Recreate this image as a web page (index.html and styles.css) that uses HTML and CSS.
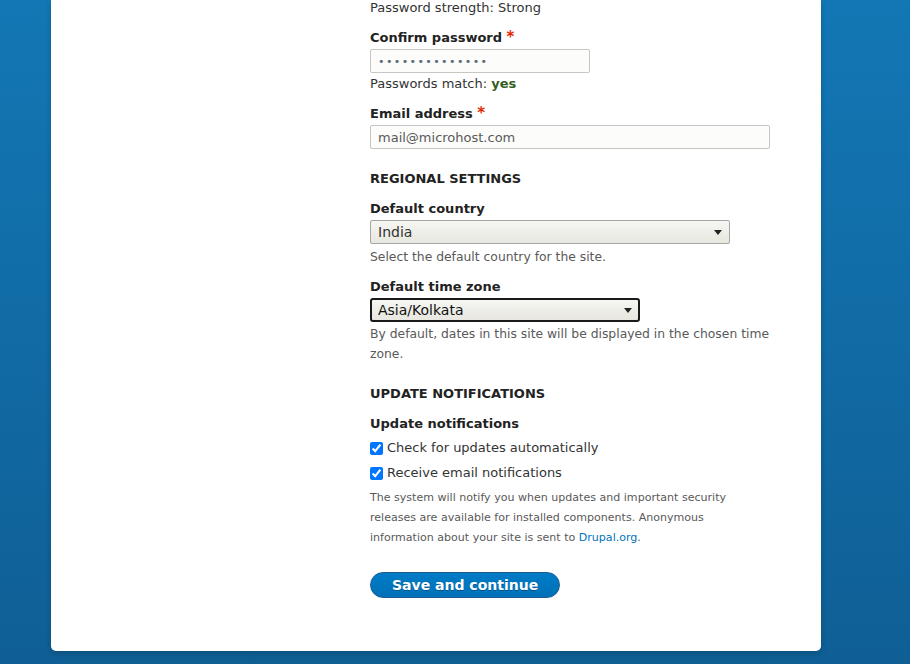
FILE: index.html
```html
<!DOCTYPE html>
<html lang="en">

<head>
    <meta charset="UTF-8">
    <meta name="viewport" content="width=device-width, initial-scale=1.0">
    <title>Configure site | Drupal</title>
    <link rel="stylesheet" href="styles.css">
</head>

<body>
    <div class="page">
        <div class="card">
            <form class="install-form">
                <div class="strength">Password strength: Strong</div>
                <div class="form-item">
                    <label for="pass2">Confirm password <span class="required">*</span></label>
                    <input id="pass2" class="form-text short" type="password" value="mypassword1234">
                    <div class="match">Passwords match: <span class="ok">yes</span></div>
                </div>
                <div class="form-item">
                    <label for="mail">Email address <span class="required">*</span></label>
                    <input id="mail" class="form-text" type="text" value="mail@microhost.com">
                </div>

                <h2 class="section first">Regional settings</h2>
                <div class="form-item">
                    <label for="country">Default country</label>
                    <span class="select-wrap wide">
                        <select id="country" class="form-select">
                            <option>India</option>
                        </select>
                    </span>
                    <div class="description">Select the default country for the site.</div>
                </div>
                <div class="form-item">
                    <label for="zone">Default time zone</label>
                    <span class="select-wrap narrow">
                        <select id="zone" class="form-select focused">
                            <option>Asia/Kolkata</option>
                        </select>
                    </span>
                    <div class="description tall">By default, dates in this site will be displayed in the chosen time zone.</div>
                </div>

                <h2 class="section spaced">Update notifications</h2>
                <div class="form-item">
                    <label>Update notifications</label>
                    <div class="checkbox first">
                        <input id="upd" type="checkbox" checked>
                        <label for="upd">Check for updates automatically</label>
                    </div>
                    <div class="checkbox">
                        <input id="notify" type="checkbox" checked>
                        <label for="notify">Receive email notifications</label>
                    </div>
                    <div class="description small">The system will notify you when updates and important security releases are available for installed components. Anonymous information about your site is sent to <a href="#">Drupal.org</a>.</div>
                </div>

                <div class="actions">
                    <button type="button" class="button">Save and continue</button>
                </div>
            </form>
        </div>
    </div>
</body>

</html>
```

FILE: styles.css
```css
html,
body {
    margin: 0;
    height: 100%;
}

body {
    background: linear-gradient(#1377b5, #0f5f95);
    font-family: "DejaVu Sans", sans-serif;
    font-size: 13px;
    line-height: 18px;
    color: #333;
    overflow: hidden;
}

.page {
    display: flex;
    padding-left: 51px;
}

.card {
    width: 770px;
    box-sizing: border-box;
    background: #FFF;
    border-radius: 0 0 5px 5px;
    box-shadow: 0px 2px 6px rgba(0, 0, 0, 0.2);
    padding: 0 0 53px 319px;
}

.install-form {
    display: flex;
    flex-direction: column;
    margin-top: -1px;
}

.form-item {
    display: flex;
    flex-direction: column;
    align-items: flex-start;
    margin-top: 12px;
}

.form-item>label {
    font-weight: bold;
    color: #222;
}

.required {
    color: #e32700;
    font-size: 15px;
    line-height: 0;
}

.form-text {
    margin-top: 2px;
    width: 400px;
    height: 24px;
    box-sizing: border-box;
    padding: 0 7px;
    border: 1px solid #c6c6c2;
    border-radius: 2px;
    background: #fcfcfa;
    font-family: "DejaVu Sans", sans-serif;
    font-size: 13px;
    color: #595959;
    outline: none;
}

.form-text.short {
    width: 220px;
    letter-spacing: 1.4px;
    color: #5a6a7a;
    font-size: 11px;
}

.match {
    margin-top: 2px;
}

.ok {
    color: #325e1c;
    font-weight: bold;
}

.section {
    margin: 20px 0 0;
    font-size: 13px;
    line-height: 18px;
    font-weight: bold;
    text-transform: uppercase;
    color: #222;
}

.section.first {
    margin-top: 21px;
}

.section.spaced {
    margin-top: 21px;
}

.section+.form-item {
    margin-top: 12px;
}

.select-wrap {
    position: relative;
    display: block;
    margin-top: 2px;
}

.select-wrap.wide {
    width: 360px;
}

.select-wrap.narrow {
    width: 270px;
}

.select-wrap::after {
    content: "";
    position: absolute;
    right: 8px;
    top: 10px;
    border-left: 4px solid transparent;
    border-right: 4px solid transparent;
    border-top: 5px solid #222;
    pointer-events: none;
}

.form-select {
    appearance: none;
    -webkit-appearance: none;
    width: 100%;
    height: 24px;
    box-sizing: border-box;
    padding: 0 7px;
    border: 1px solid #a6a6a6;
    border-radius: 2px;
    background: linear-gradient(#f6f6f3, #e7e7df);
    font-family: "DejaVu Sans", sans-serif;
    font-size: 14px;
    color: #333;
    outline: none;
}

.form-select.focused {
    border: 2px solid #1a1a1a;
    border-radius: 3px;
    padding: 0 6px;
    color: #111;
}

.description {
    margin-top: 4px;
    max-width: 400px;
    font-size: 12.35px;
    color: #595959;
}

.description.tall {
    margin-top: 2px;
    line-height: 20px;
}

.description.small {
    margin-top: 6px;
    max-width: 365px;
    font-size: 11.05px;
    line-height: 20px;
}

.description a {
    color: #0074bd;
    text-decoration: none;
}

.checkbox {
    display: flex;
    align-items: center;
    margin-top: 7px;
}

.checkbox.first {
    margin-top: 6px;
}

.checkbox input {
    width: 13px;
    height: 13px;
    margin: 0 4px 0 0;
}

.checkbox label {
    color: #333;
}

.actions {
    margin-top: 24px;
}

.button {
    height: 26px;
    padding: 0 21px;
    border: 1px solid #1e5c90;
    border-radius: 20px;
    background: linear-gradient(#007bc6, #0071b8);
    color: #FFF;
    font-family: "DejaVu Sans", sans-serif;
    font-size: 14px;
    font-weight: bold;
    text-shadow: 0 1px 0 rgba(0, 0, 0, 0.3);
    cursor: pointer;
}
```
